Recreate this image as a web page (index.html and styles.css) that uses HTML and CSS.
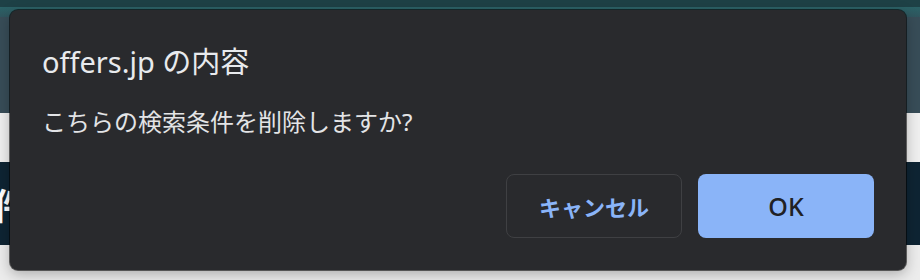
FILE: index.html
```html
<!DOCTYPE html>
<html lang="ja">
<head>
<meta charset="utf-8">
<title>offers.jp の内容</title>
<link rel="stylesheet" href="styles.css">
</head>
<body>
<div class="page">
  <div class="topbar"></div>
  <div class="topline"></div>
  <div class="header"></div>
  <div class="strip"></div>
  <div class="band"><span class="band-text">検索条件</span></div>
  <div class="footer"></div>

  <div class="dialog" role="dialog">
    <div class="dialog-title">offers.jp の内容</div>
    <div class="dialog-message">こちらの検索条件を削除しますか?</div>
    <div class="dialog-actions">
      <button class="btn btn-cancel">キャンセル</button>
      <button class="btn btn-ok">OK</button>
    </div>
  </div>
</div>
</body>
</html>
```

FILE: styles.css
```css
html, body {
  margin: 0;
  padding: 0;
  background: #ececec;
}

.page {
  position: relative;
  width: 920px;
  height: 280px;
  overflow: hidden;
  display: flex;
  flex-direction: column;
  font-family: "Noto Sans", "Noto Sans CJK JP", sans-serif;
}

.topbar {
  height: 7px;
  background: #1e4146;
}

.topline {
  height: 10px;
  background: linear-gradient(#2b6266, #30555e);
}

.header {
  height: 96px;
  background: #384d58;
}

.strip {
  height: 49px;
  background: #efefef;
}

.band {
  height: 83px;
  background: #0e2433;
  display: flex;
  align-items: center;
  overflow: hidden;
}

.band-text {
  margin-left: -115px;
  color: #ffffff;
  font-family: "Noto Sans CJK JP", sans-serif;
  font-weight: 700;
  font-size: 36px;
  line-height: 40px;
  white-space: nowrap;
}

.footer {
  flex: 1;
  background: #ececec;
}

.dialog {
  position: absolute;
  left: 10px;
  top: 10px;
  width: 896px;
  height: 260px;
  box-sizing: border-box;
  padding: 36px 32px 32px;
  background: #292a2d;
  border-radius: 8px;
  box-shadow: 0 0 0 1px rgba(0, 0, 0, 0.55), 0 4px 14px rgba(0, 0, 0, 0.28);
  display: flex;
  flex-direction: column;
}

.dialog-title {
  color: #e8eaed;
  font-size: 29px;
  line-height: 32px;
  white-space: nowrap;
}

.dialog-message {
  margin-top: 30px;
  color: #e3e4e6;
  font-size: 24px;
  line-height: 28px;
  white-space: nowrap;
}

.dialog-actions {
  margin-top: 38px;
  display: flex;
  justify-content: flex-end;
  gap: 16px;
}

.btn {
  width: 176px;
  height: 64px;
  box-sizing: border-box;
  border-radius: 8px;
  font-family: "Noto Sans", "Noto Sans CJK JP", sans-serif;
  font-size: 22px;
  font-weight: 500;
  padding: 0;
  cursor: pointer;
}

.btn-cancel {
  background: transparent;
  border: 1px solid #3f4043;
  color: #8ab4f8;
  font-weight: 700;
}

.btn-ok {
  background: #8ab4f8;
  border: none;
  color: #202124;
  font-size: 25px;
  font-weight: 500;
}
```
